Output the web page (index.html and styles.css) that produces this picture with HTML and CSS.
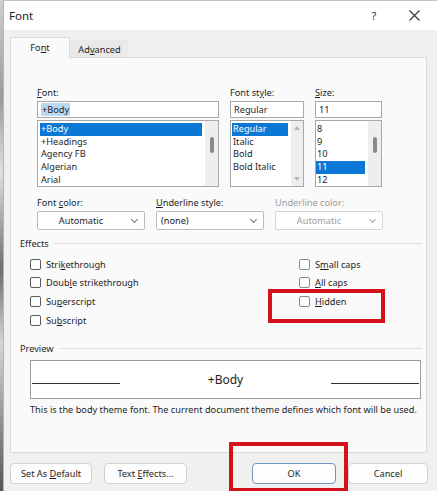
FILE: index.html
```html
<!DOCTYPE html>
<html>
<head>
<meta charset="utf-8">
<link rel="stylesheet" href="styles.css">
</head>
<body>
<div class="strip"></div>
<div class="win">
  <div class="titlebar">
    <span class="title">Font</span>
    <span class="help">?</span>
    <svg class="close" width="11" height="11" viewBox="0 0 11 11"><path d="M0.5 0.5 L10.5 10.5 M10.5 0.5 L0.5 10.5" stroke="#333" stroke-width="1.1" fill="none"/></svg>
  </div>

  <div class="tabs">
    <div class="tab active">Fo<u>n</u>t</div>
    <div class="tab">Ad<u>v</u>anced</div>
  </div>

  <div class="panel">
    <div class="top">
      <div class="field">
        <div class="lbl"><u>F</u>ont:</div>
        <div class="input"><span class="sel-text">+Body</span></div>
        <div class="list list-font">
          <div class="items">
            <div class="item selected">+Body</div>
            <div class="item">+Headings</div>
            <div class="item">Agency FB</div>
            <div class="item">Algerian</div>
            <div class="item">Arial</div>
          </div>
          <div class="sbar"><div class="thumb"></div></div>
        </div>
      </div>
      <div class="field">
        <div class="lbl">Font st<u>y</u>le:</div>
        <div class="input">Regular</div>
        <div class="list list-style">
          <div class="items">
            <div class="item selected">Regular</div>
            <div class="item">Italic</div>
            <div class="item">Bold</div>
            <div class="item">Bold Italic</div>
          </div>
          <div class="sbar arrows"><span class="up"></span><span class="down"></span></div>
        </div>
      </div>
      <div class="field">
        <div class="lbl"><u>S</u>ize:</div>
        <div class="input">11</div>
        <div class="list list-size">
          <div class="items">
            <div class="item">8</div>
            <div class="item">9</div>
            <div class="item">10</div>
            <div class="item selected">11</div>
            <div class="item">12</div>
          </div>
          <div class="sbar"><div class="thumb"></div></div>
        </div>
      </div>
    </div>

    <div class="row2">
      <div class="field">
        <div class="lbl">Font <u>c</u>olor:</div>
        <div class="dd"><span class="dd-text center">Automatic</span><span class="chev"></span></div>
      </div>
      <div class="field">
        <div class="lbl"><u>U</u>nderline style:</div>
        <div class="dd"><span class="dd-text">(none)</span><span class="chev"></span></div>
      </div>
      <div class="field disabled">
        <div class="lbl">Underline color:</div>
        <div class="dd"><span class="dd-text center">Automatic</span><span class="chev"></span></div>
      </div>
    </div>

    <div class="group-head effects-head"><span>Effects</span><span class="rule"></span></div>
    <div class="effects">
      <div class="col col-left">
        <div class="cb"><span class="box"></span>Stri<u>k</u>ethrough</div>
        <div class="cb"><span class="box"></span>Doub<u>l</u>e strikethrough</div>
        <div class="cb"><span class="box"></span>Su<u>p</u>erscript</div>
        <div class="cb"><span class="box"></span>Su<u>b</u>script</div>
      </div>
      <div class="col">
        <div class="cb"><span class="box light"></span>S<u>m</u>all caps</div>
        <div class="cb"><span class="box light"></span><u>A</u>ll caps</div>
        <div class="cb"><span class="box light"></span><u>H</u>idden</div>
      </div>
    </div>

    <div class="group-head preview-head"><span>Preview</span><span class="rule"></span></div>
    <div class="preview">
      <span class="pline"></span>
      <span class="ptext">+Body</span>
      <span class="pline"></span>
    </div>
    <div class="desc">This is the body theme font. The current document theme defines which font will be used.</div>
  </div>

  <div class="buttons">
    <button class="btn b-default">Set As <u>D</u>efault</button>
    <button class="btn b-effects">Text <u>E</u>ffects...</button>
    <button class="btn b-ok">OK</button>
    <button class="btn b-cancel">Cancel</button>
  </div>

  <div class="mark mark-hidden"></div>
  <div class="mark mark-ok"></div>
</div>
</body>
</html>
```

FILE: styles.css
```css
html, body {
  margin: 0;
  padding: 0;
}
body {
  width: 437px;
  height: 491px;
  overflow: hidden;
  display: flex;
  background: #f0f0f0;
  font-family: "Noto Sans", "Open Sans", sans-serif;
  font-size: 9.2px;
  color: #1e1e1e;
}
u { text-decoration: underline; text-underline-offset: 1px; }

.strip {
  width: 3px;
  height: 491px;
  background: linear-gradient(#d0d0d0 0, #9a9a9a 20%, #e0e0e0 35%, #6d6d6d 55%, #d6d6d6 70%, #555 100%);
}
.win {
  position: relative;
  width: 434px;
  height: 491px;
  box-sizing: border-box;
  background: #f0f0f0;
  border-left: 1px solid #b4b4b4;
  border-top: 1px solid #c4c4c4;
}

/* title bar */
.titlebar {
  height: 29px;
  background: #fff;
  display: flex;
  align-items: center;
  padding-left: 5px;
}
.title { font-size: 11.5px; color: #1a1a1a; }
.help {
  margin-left: auto;
  width: 10px;
  text-align: center;
  font-size: 11px;
  color: #333;
}
.close { margin-left: 30px; margin-right: 17px; }

/* tabs */
.tabs {
  display: flex;
  align-items: flex-end;
  padding-left: 6px;
  margin-top: 7px;
}
.tab {
  box-sizing: border-box;
  display: flex;
  align-items: center;
  justify-content: center;
}
.tab.active {
  width: 60px;
  height: 21px;
  margin-bottom: -1px;
  background: #fafafa;
  border: 1px solid #dadada;
  border-bottom: none;
  position: relative;
  z-index: 1;
  padding-bottom: 1px;
}
.tab:not(.active) {
  width: 57px;
  height: 17px;
  margin-left: 1px;
  background: #e9e9e9;
  padding-top: 1px;
}

/* panel */
.panel {
  margin-left: 6px;
  width: 417px;
  height: 396px;
  box-sizing: border-box;
  border: 1px solid #dadada;
  background: #fafafa;
}
.top {
  margin-left: 26px;
  padding-top: 28px;
  display: grid;
  grid-template-columns: 182px 74px 67px;
  column-gap: 11px;
}
.lbl {
  height: 13px;
  line-height: 13px;
  white-space: nowrap;
}
.input {
  margin-top: 2px;
  height: 17px;
  box-sizing: border-box;
  border: 1px solid #a8a8a8;
  background: #fff;
  line-height: 15px;
  padding-left: 3px;
  white-space: nowrap;
}
.sel-text { background: #b9d8f4; padding: 0 1px; }
.list {
  margin-top: 2px;
  height: 67px;
  box-sizing: border-box;
  border: 1px solid #a8a8a8;
  background: #fff;
  display: flex;
}
.items {
  flex: 1;
  padding-top: 2px;
  margin-right: 3px;
}
.list-font .items { padding-left: 2px; }
.list-style .items { padding-left: 1px; }
.item {
  height: 12.7px;
  line-height: 12.7px;
  padding-left: 1px;
  white-space: nowrap;
}
.item.selected { background: #0a78d4; color: #fff; }
.sbar {
  width: 13px;
  background: #eeeeee;
  display: flex;
  flex-direction: column;
  align-items: center;
}
.list-style .sbar { width: 12px; }
.thumb {
  margin-top: 16px;
  width: 4px;
  height: 16px;
  background: #8a8a8a;
  border-radius: 2px;
}
.arrows {
  justify-content: space-between;
  padding: 5px 0 5px;
  box-sizing: border-box;
}
.up, .down {
  width: 0;
  height: 0;
  border-left: 3.5px solid transparent;
  border-right: 3.5px solid transparent;
}
.up { border-bottom: 4px solid #b4b4b4; }
.down { border-top: 4px solid #b4b4b4; }

/* row 2 */
.row2 {
  margin-left: 26px;
  margin-top: 9px;
  display: grid;
  grid-template-columns: 108px 108px 108px;
  column-gap: 11px;
}
.dd {
  margin-top: 2px;
  height: 19px;
  box-sizing: border-box;
  border: 1px solid #bcbcbc;
  border-radius: 2px;
  background: #fff;
  display: flex;
  align-items: center;
}
.dd-text { flex: 1; padding-left: 4px; white-space: nowrap; }
.dd-text.center { text-align: center; padding-left: 0; }
.chev {
  width: 20px;
  height: 8px;
  position: relative;
}
.chev::after {
  content: "";
  display: block;
  width: 4px;
  height: 4px;
  margin: 0 auto;
  border-right: 1px solid #777;
  border-bottom: 1px solid #777;
  transform: rotate(45deg);
}
.disabled { color: #9d9d9d; }
.disabled .dd { border-color: #d4d4d4; }
.disabled .chev::after { border-color: #aaa; }

/* groups */
.group-head {
  margin-left: 9px;
  margin-right: 4px;
  display: flex;
  align-items: center;
  height: 13px;
  line-height: 13px;
}
.rule {
  flex: 1;
  height: 1px;
  background: #dedede;
  margin-left: 6px;
}
.effects-head { margin-top: 7px; }
.effects {
  margin-left: 19px;
  margin-top: 5px;
  display: flex;
}
.col-left { width: 269px; }
.cb {
  height: 18.67px;
  display: flex;
  align-items: center;
  white-space: nowrap;
}
.box {
  width: 11px;
  height: 11px;
  box-sizing: border-box;
  border: 1px solid #5a5a5a;
  border-radius: 2px;
  background: #fff;
  margin-right: 5px;
}
.box.light { border-color: #8a8a8a; }

.preview-head { margin-top: 12px; }
.preview {
  margin-left: 19px;
  margin-top: 5.5px;
  width: 391px;
  height: 39px;
  box-sizing: border-box;
  border: 1px solid #9c9c9c;
  background: #fff;
  display: flex;
  justify-content: space-between;
  align-items: center;
  padding: 0 1px;
}
.pline {
  width: 88px;
  height: 1px;
  background: #333;
  align-self: flex-end;
  margin-bottom: 14px;
}
.ptext { font-size: 12px; color: #222; }
.desc {
  margin-left: 19px;
  margin-top: 3.5px;
  line-height: 13px;
  white-space: nowrap;
}

/* buttons */
.buttons {
  margin-top: 10px;
  padding-left: 6px;
  display: flex;
  align-items: center;
}
.btn {
  height: 21px;
  box-sizing: border-box;
  border: 1px solid #d0d0d0;
  border-radius: 4px;
  background: #fdfdfd;
  font-family: "Noto Sans", "Open Sans", sans-serif;
  font-size: 9.2px;
  color: #1e1e1e;
  padding: 0;
}
.b-default { width: 82px; }
.b-effects { width: 83px; margin-left: 12px; }
.b-ok { width: 84px; margin-left: auto; border-color: #6c98c6; }
.b-cancel { width: 80px; margin-left: 12px; margin-right: 9px; }

/* annotation overlays */
.mark {
  position: absolute;
  box-sizing: border-box;
  border: 4px solid #d3121b;
}
.mark-hidden { left: 264px; top: 288px; width: 117px; height: 34px; }
.mark-ok { left: 225px; top: 441px; width: 119px; height: 50px; }
```
